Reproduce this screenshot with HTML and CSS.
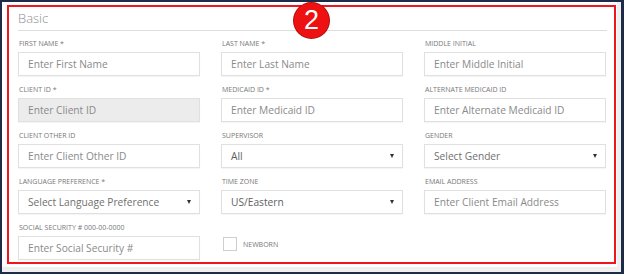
FILE: index.html
```html
<!DOCTYPE html>
<html lang="en">
<head>
  <meta charset="UTF-8" />
  <title>Client - Basic</title>
  <link rel="stylesheet" href="styles.css">
</head>
<body>
  <div class="frame">
    <div class="section">
      <div class="step-badge">2</div>
      <h2 class="section-title">Basic</h2>

      <div class="form-grid">
        <div class="field">
          <label>First Name *</label>
          <input type="text" placeholder="Enter First Name">
        </div>
        <div class="field">
          <label>Last Name *</label>
          <input type="text" placeholder="Enter Last Name">
        </div>
        <div class="field">
          <label>Middle Initial</label>
          <input type="text" placeholder="Enter Middle Initial">
        </div>

        <div class="field">
          <label>Client ID *</label>
          <input type="text" placeholder="Enter Client ID" class="disabled" disabled>
        </div>
        <div class="field">
          <label>Medicaid ID *</label>
          <input type="text" placeholder="Enter Medicaid ID">
        </div>
        <div class="field">
          <label>Alternate Medicaid ID</label>
          <input type="text" placeholder="Enter Alternate Medicaid ID">
        </div>

        <div class="field">
          <label>Client Other ID</label>
          <input type="text" placeholder="Enter Client Other ID">
        </div>
        <div class="field">
          <label>Supervisor</label>
          <div class="select"><span class="value">All</span><span class="caret"></span></div>
        </div>
        <div class="field">
          <label>Gender</label>
          <div class="select"><span>Select Gender</span><span class="caret"></span></div>
        </div>

        <div class="field">
          <label>Language Preference *</label>
          <div class="select"><span>Select Language Preference</span><span class="caret"></span></div>
        </div>
        <div class="field">
          <label>Time Zone</label>
          <div class="select"><span class="value">US/Eastern</span><span class="caret"></span></div>
        </div>
        <div class="field">
          <label>Email Address</label>
          <input type="text" placeholder="Enter Client Email Address">
        </div>

        <div class="field">
          <label>Social Security # <span class="hint">000-00-0000</span></label>
          <input type="text" placeholder="Enter Social Security #">
        </div>
        <div class="field">
          <label>&nbsp;</label>
          <div class="check-row">
            <span class="checkbox"></span>
            <span class="check-label">Newborn</span>
          </div>
        </div>
      </div>
    </div>
  </div>
</body>
</html>
```

FILE: styles.css
```css
body {
  margin: 0;
  font-family: 'Open Sans', 'Liberation Sans', sans-serif;
  background: #ffffff;
}

.frame {
  width: 624px;
  height: 274px;
  box-sizing: border-box;
  border: 2px solid #1d2b49;
  border-right-width: 3px;
  background: #ffffff;
  box-shadow: inset -4px -5px 0 #efefef;
  padding: 3px 0 0 5px;
}

.section {
  position: relative;
  width: 609px;
  height: 259px;
  box-sizing: border-box;
  border: 2px solid #f0141c;
  padding: 0 7px 0 9px;
  background: #ffffff;
}

.step-badge {
  position: absolute;
  top: -4px;
  left: 285px;
  width: 35px;
  height: 35px;
  border-radius: 50%;
  background: #ee1111;
  box-shadow: 0 0 0 1px #b30e0e;
  color: #ffffff;
  font-size: 27px;
  line-height: 35px;
  text-align: center;
  font-family: 'Liberation Sans', Arial, sans-serif;
}

.section-title {
  margin: 2px 0 0;
  padding-bottom: 3px;
  border-bottom: 1px solid #dedede;
  font-size: 13px;
  line-height: 18px;
  font-weight: 300;
  color: #8f8f8f;
}

.form-grid {
  margin-top: 8px;
  display: grid;
  grid-template-columns: repeat(3, 182px);
  column-gap: 21px;
  row-gap: 9px;
}

.field {
  display: flex;
  flex-direction: column;
}

.field label {
  font-size: 7px;
  line-height: 10px;
  margin: 0 0 3px 1px;
  text-transform: uppercase;
  color: #777777;
}

.field label .hint {
  text-transform: none;
}

.field input,
.select {
  height: 24px;
  box-sizing: border-box;
  border: 1px solid #e0e0e0;
  box-shadow: 0 1px 1px rgba(0, 0, 0, 0.04);
  background: #ffffff;
  font-family: inherit;
  font-size: 10.2px;
  padding: 0 9px;
  margin: 0;
  outline: none;
  color: #555555;
}

.field input::placeholder {
  color: #8a8a8a;
}

.field input.disabled {
  background: #ececec;
}

.select {
  display: flex;
  align-items: center;
  justify-content: space-between;
  color: #707070;
  padding-right: 8px;
}

.select .value {
  color: #606060;
}

.caret {
  width: 0;
  height: 0;
  border-left: 2.5px solid transparent;
  border-right: 2.5px solid transparent;
  border-top: 4px solid #333333;
}

.check-row {
  height: 24px;
  display: flex;
  align-items: center;
  gap: 6px;
  padding-left: 2px;
  margin-top: -4px;
}

.checkbox {
  width: 14px;
  height: 14px;
  box-sizing: border-box;
  border: 1px solid #cfcfcf;
  background: #ffffff;
}

.check-label {
  font-size: 7px;
  text-transform: uppercase;
  color: #777777;
}
```
